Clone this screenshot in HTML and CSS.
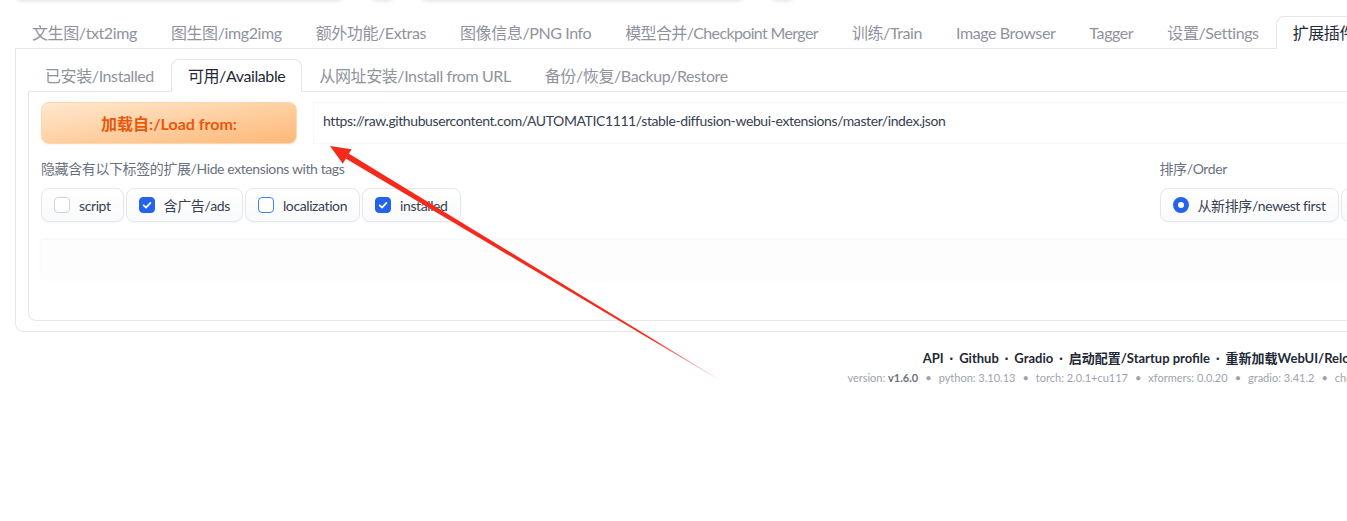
FILE: index.html
```html
<!DOCTYPE html>
<html lang="zh-CN">
<head>
<meta charset="utf-8">
<title>Stable Diffusion</title>
<link rel="stylesheet" href="styles.css">
</head>
<body>
<div class="topstrip">
  <span class="blob b1"></span><span class="blob b2"></span><span class="blob b3"></span><span class="blob b4"></span>
</div>
<div class="app">
  <div class="tabs">
    <div class="tabnav">
      <button class="tab">文生图/txt2img</button>
      <button class="tab">图生图/img2img</button>
      <button class="tab">额外功能/Extras</button>
      <button class="tab">图像信息/PNG Info</button>
      <button class="tab narrow">模型合并/Checkpoint Merger</button>
      <button class="tab">训练/Train</button>
      <button class="tab">Image Browser</button>
      <button class="tab">Tagger</button>
      <button class="tab">设置/Settings</button>
      <button class="tab selected">扩展插件/Extensions</button>
    </div>
    <div class="tabpanel">
      <div class="tabnav">
        <button class="tab">已安装/Installed</button>
        <button class="tab selected">可用/Available</button>
        <button class="tab">从网址安装/Install from URL</button>
        <button class="tab">备份/恢复/Backup/Restore</button>
      </div>
      <div class="tabpanel inner">
        <div class="load-row">
          <button class="load-btn">加载自:/Load from:</button>
          <div class="url-box">https://raw.githubusercontent.com/AUTOMATIC1111/stable-diffusion-webui-extensions/master/index.json</div>
        </div>
        <div class="filter-row">
          <div class="col">
            <div class="label">隐藏含有以下标签的扩展/Hide extensions with tags</div>
            <div class="choices">
              <label class="choice"><span class="cb"></span>script</label>
              <label class="choice"><span class="cb on"><svg viewBox="0 0 16 16"><path d="M4.2 8.3 L6.9 10.9 L11.9 5.6"/></svg></span>含广告/ads</label>
              <label class="choice"><span class="cb focus"></span>localization</label>
              <label class="choice"><span class="cb on"><svg viewBox="0 0 16 16"><path d="M4.2 8.3 L6.9 10.9 L11.9 5.6"/></svg></span>installed</label>
            </div>
          </div>
          <div class="col">
            <div class="label">排序/Order</div>
            <div class="choices">
              <label class="choice"><span class="rd on"></span>从新排序/newest first</label>
              <label class="choice"><span class="rd"></span>从旧排序/oldest first</label>
              <label class="choice"><span class="rd"></span>a-z</label>
              <label class="choice"><span class="rd"></span>z-a</label>
              <label class="choice"><span class="rd"></span>内部排序/internal order</label>
              <label class="choice"><span class="rd"></span>更新时间/update time</label>
              <label class="choice"><span class="rd"></span>创建时间/create time</label>
              <label class="choice"><span class="rd"></span>stars</label>
            </div>
          </div>
        </div>
        <div class="html-box"></div>
      </div>
    </div>
  </div>
  <footer class="footer">
    <div class="links">API<span class="sep">·</span>Github<span class="sep">·</span>Gradio<span class="sep">·</span>启动配置/Startup profile<span class="sep">·</span>重新加载WebUI/Reload UI</div>
    <div class="versions">version: <b>v1.6.0</b><span class="dot">•</span>python: 3.10.13<span class="dot">•</span>torch: 2.0.1+cu117<span class="dot">•</span>xformers: 0.0.20<span class="dot">•</span>gradio: 3.41.2<span class="dot">•</span>checkpoint: <b>6ce0161689</b></div>
  </footer>
</div>
<svg class="arrow" viewBox="0 0 1347 521" width="1347" height="521">
  <defs>
    <linearGradient id="fade" gradientUnits="userSpaceOnUse" x1="347" y1="156" x2="723" y2="382">
      <stop offset="0" stop-color="#f52a1c"/>
      <stop offset="0.8" stop-color="#f52a1c"/>
      <stop offset="1" stop-color="#f52a1c" stop-opacity="0"/>
    </linearGradient>
  </defs>
  <polygon points="345.6,158.6 348.6,153.6 723.2,381.8 722.8,382.2" fill="url(#fade)"/>
  <polygon points="330,146 351.6,149.2 342.8,163.8" fill="#f52a1c"/>
</svg>
</body>
</html>
```
FILE: styles.css
```css
html, body {
  margin: 0;
  padding: 0;
  overflow: hidden;
  background: #ffffff;
}
body {
  font-family: "Lato", "Noto Sans CJK SC", sans-serif;
  letter-spacing: -0.025em;
  color: #1f2937;
  width: 1347px;
  height: 521px;
  position: relative;
}
button {
  font-family: inherit;
  letter-spacing: inherit;
  margin: 0;
}

.topstrip {
  display: flex;
  height: 6px;
}
.blob {
  display: block;
  height: 10px;
  margin-top: -10px;
  background: #fff;
  border-radius: 0 0 8px 8px;
  box-shadow: 0 1px 4px rgba(0, 0, 0, 0.13);
}
.b1 { width: 330px; margin-left: 14px; }
.b2 { width: 25px; margin-left: 26px; }
.b3 { width: 325px; margin-left: 25px; }
.b4 { width: 25px; margin-left: 25px; }

.app {
  width: 2273px;
  margin-left: 15px;
  padding-top: 10px;
}

.tabnav {
  display: flex;
  border-bottom: 1px solid #e5e7eb;
  white-space: nowrap;
}
.tab {
  height: 33px;
  margin-bottom: -1px;
  padding: 0 16px;
  border: 1px solid transparent;
  border-bottom: none;
  border-radius: 8px 8px 0 0;
  background: transparent;
  color: #8f939e;
  font-size: 16px;
  line-height: 32px;
  flex: none;
}
.tab.narrow {
  letter-spacing: -0.04em;
}
.tab.selected {
  background: #fff;
  border-color: #e5e7eb;
  color: #1f2937;
}

.tabpanel {
  border: 1px solid #e5e7eb;
  border-top: none;
  border-radius: 0 0 8px 8px;
  padding: 10px 12px 10px;
}
.tabpanel.inner {
  padding: 10px 12px 40px;
}

.load-row {
  display: flex;
  gap: 16px;
  align-items: stretch;
}
.load-btn {
  flex: none;
  width: 256px;
  height: 42px;
  border: 1px solid #fed7aa;
  border-radius: 8px;
  background: linear-gradient(to bottom right, #ffe8cf, #fdb877);
  color: #ea580c;
  font-size: 16px;
  font-weight: 700;
  letter-spacing: normal;
  box-shadow: 0 1px 2px rgba(0, 0, 0, 0.05);
}
.url-box {
  flex: 1;
  height: 42px;
  box-sizing: border-box;
  padding: 9px 10px;
  font-size: 14px;
  line-height: 20px;
  color: #374151;
  background: #fff;
  box-shadow: 0 0 2px rgba(0, 0, 0, 0.1) inset;
  white-space: nowrap;
}

.filter-row {
  display: flex;
  gap: 16px;
  margin-top: 15px;
}
.col {
  flex: 1;
  min-width: 0;
}
.label {
  font-size: 14px;
  line-height: 20px;
  color: #6b7280;
  margin-bottom: 9px;
}
.choices {
  display: flex;
  gap: 2px;
  white-space: nowrap;
}
.choice {
  display: flex;
  align-items: center;
  gap: 9px;
  height: 34px;
  box-sizing: border-box;
  padding: 0 12px;
  border: 1px solid #e5e7eb;
  border-radius: 8px;
  background: linear-gradient(to top, #f9fafb, #ffffff);
  box-shadow: 0 1px 2px rgba(0, 0, 0, 0.04);
  font-size: 14px;
  color: #374151;
  flex: none;
}
.cb {
  width: 16px;
  height: 16px;
  box-sizing: border-box;
  border: 1px solid #d1d5db;
  border-radius: 4px;
  background: #fff;
  display: flex;
}
.cb.focus {
  border-color: #3b82f6;
}
.cb.on {
  background: #2563eb;
  border-color: #2563eb;
}
.cb svg {
  width: 14px;
  height: 14px;
}
.cb path {
  fill: none;
  stroke: #fff;
  stroke-width: 2;
  stroke-linecap: round;
  stroke-linejoin: round;
}
.rd {
  width: 16px;
  height: 16px;
  box-sizing: border-box;
  border: 1px solid #d1d5db;
  border-radius: 50%;
  background: #fff;
}
.rd.on {
  border: 5px solid #2563eb;
}

.html-box {
  margin-top: 18px;
  height: 40px;
  background: #fdfdfd;
  box-shadow: 0 -1px 3px rgba(0, 0, 0, 0.05);
}

.footer {
  text-align: center;
  padding-top: 16px;
  white-space: nowrap;
  letter-spacing: normal;
}
.links {
  font-size: 13px;
  line-height: 20px;
  font-weight: 700;
  color: #1f2937;
}
.sep {
  margin: 0 6px;
}
.versions {
  margin-top: 2px;
  font-size: 11px;
  line-height: 16px;
  color: #9ca3af;
}
.versions b {
  color: #6b7280;
}
.dot {
  margin: 0 7px;
}

.arrow {
  position: absolute;
  left: 0;
  top: 0;
  pointer-events: none;
}
```
